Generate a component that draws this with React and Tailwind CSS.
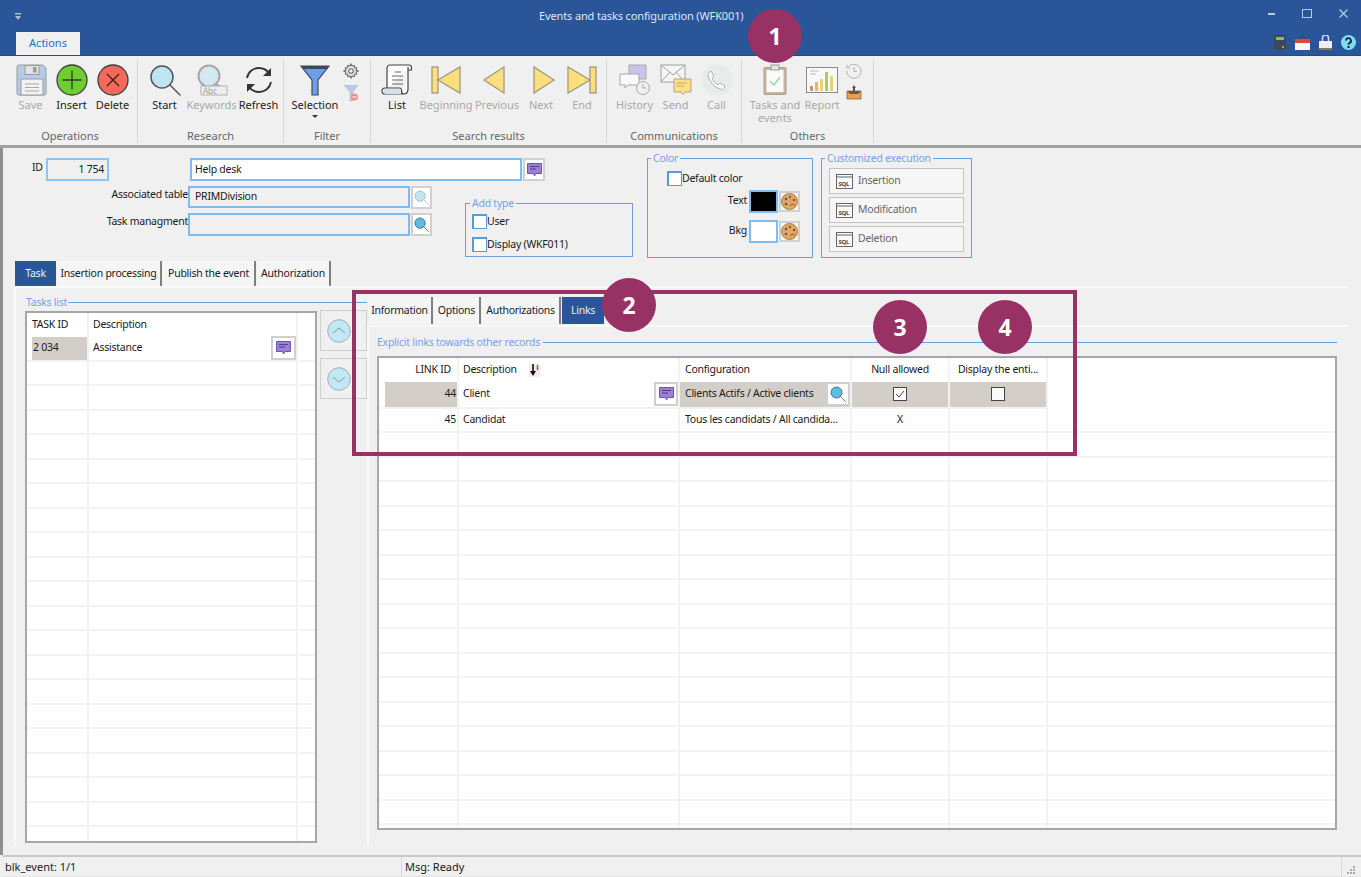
import React from "react";

const Mag = ({ size = 32, fill = "#bfe4f2", stroke = "#555", opacity = 1 }) => (
  <svg width={size} height={size} viewBox="0 0 32 32" style={{ opacity }}>
    <circle cx="13" cy="13" r="11" fill={fill} stroke={stroke} strokeWidth="1.5" />
    <path d="M21 21 L31 31" stroke={stroke} strokeWidth="1.5" strokeLinecap="round" />
  </svg>
);
const Floppy = () => (
  <svg width="32" height="32" viewBox="0 0 32 32">
    <path d="M2 3a2 2 0 0 1 2-2h24l3 3v25a2 2 0 0 1-2 2H4a2 2 0 0 1-2-2z" fill="#b4cbea" stroke="#9a9a9a" />
    <rect x="10" y="1.5" width="14" height="9" fill="#dfe3e8" stroke="#9a9a9a" />
    <rect x="18" y="3" width="3.5" height="5.5" fill="#9a9a9a" />
    <rect x="6" y="15" width="22" height="16" fill="#f2f2f2" stroke="#9a9a9a" />
    <path d="M10 20h14M10 23.500h14M10 27h14" stroke="#aaa" />
  </svg>
);
const RoundIcon = ({ bg, plus }) => (
  <svg width="32" height="32" viewBox="0 0 32 32">
    <circle cx="16" cy="16" r="15" fill={bg} stroke="#3c3c3c" strokeWidth="1.300" />
    {plus ? (
      <path d="M16 6.500v19M6.500 16h19" stroke="#2c3a20" strokeWidth="1.300" />
    ) : (
      <path d="M10 10l12 12M22 10L10 22" stroke="#40201c" strokeWidth="1.300" />
    )}
  </svg>
);
const Keywords = () => (
  <svg width="32" height="32" viewBox="0 0 32 32">
    <circle cx="13" cy="12" r="10.500" fill="#d3e8f0" stroke="#a6a6a6" strokeWidth="2" />
    <path d="M20 20l8 6" stroke="#a6a6a6" strokeWidth="2.500" />
    <rect x="5" y="22" width="26" height="9" fill="#eee" stroke="#b0b0b0" />
    <text x="7" y="30" fontSize="8" fill="#a0a0a0" fontFamily="Noto Sans, sans-serif">Abc</text>
  </svg>
);
const Refresh = () => (
  <svg width="30" height="30" viewBox="0 0 30 30" fill="none" stroke="#333" strokeWidth="1.800">
    <path d="M3 13C4 7 9 3 15 3c5 0 8 2 11 6" />
    <path d="M27 17c-1 6-6 10-12 10-5 0-8-2-11-6" />
    <path d="M27 3v8h-8z" fill="#333" stroke="none" />
    <path d="M3 27v-8h8z" fill="#333" stroke="none" />
  </svg>
);
const Funnel = () => (
  <svg width="30" height="32" viewBox="0 0 30 32">
    <path d="M1 2h28L18 16v15h-6V16z" fill="#6f9fe8" stroke="#3c4a5c" strokeWidth="1.200" />
    <path d="M1 2h28l-2 3H3z" fill="#3c4a5c" />
  </svg>
);
const Gear = () => (
  <svg width="16" height="16" viewBox="0 0 24 24" fill="#e8e8e8" stroke="#666" strokeWidth="1.600">
    <path d="M12 1.500l1.600 3 3-.8.800 3 3 .8-.8 3 3 1.500-3 1.500.8 3-3 .8-.8 3-3-.8-1.600 3-1.600-3-3 .8-.8-3-3-.8.800-3-3-1.500 3-1.500-.8-3 3-.8.800-3 3 .8z" />
    <circle cx="12" cy="12" r="3.500" fill="#f0f0f0" />
  </svg>
);
const SmallFunnel = () => (
  <svg width="15" height="17" viewBox="0 0 15 17">
    <path d="M0 0h14L9 7v9H6V7z" fill="#b7cbe8" stroke="#bbb" strokeWidth=".6" />
    <circle cx="10.500" cy="12" r="3.500" fill="#f0908a" />
    <path d="M8.500 12h4" stroke="#fff" />
  </svg>
);
const Scroll = () => (
  <svg width="32" height="32" viewBox="0 0 32 32" fill="none" stroke="#444" strokeWidth="1.200">
    <path d="M6 24V4a3 3 0 0 1 3-3h19a2.500 2.500 0 0 1 2.500 2.500V6H27" fill="#fff" />
    <path d="M27 3v22c0 3-1 5-4 5H4c-2 0-3-1-3-3s1-3 3-3h15c1 0 1.500 1 1.500 3s1 3 2.500 3" fill="#fff" />
    <path d="M2 25h17l1 5H4z" fill="#d5e2e8" stroke="none" />
    <path d="M14 8h6M11 12h11M11 16h11M11 20h11" strokeWidth="1" stroke="#666" />
  </svg>
);
const Nav = ({ kind }) => {
  const p = { fill: "#fbdf7d", stroke: "#a09a80", strokeWidth: 1.300 };
  return (
    <svg width="30" height="30" viewBox="0 0 30 30">
      {kind === "begin" && (<><rect x="1" y="2" width="6" height="26" {...p} /><path d="M29 2v26L7 15z" {...p} /></>)}
      {kind === "prev" && <path d="M22 2v26L2 15z" {...p} />}
      {kind === "next" && <path d="M8 2v26l20-13z" {...p} />}
      {kind === "end" && (<><path d="M1 2v26l22-13z" {...p} /><rect x="23" y="2" width="6" height="26" {...p} /></>)}
    </svg>
  );
};
const History = () => (
  <svg width="32" height="32" viewBox="0 0 32 32">
    <path d="M10 1h17v14H14l-4-2z" fill="#c9c3ee" stroke="#a8a8a8" />
    <path d="M1 10h19v11H9l-3 3v-3H1z" fill="#fafafa" stroke="#a8a8a8" />
    <circle cx="24" cy="24" r="6.500" fill="#f0f0f0" stroke="#a8a8a8" />
    <path d="M24 20v4h3" stroke="#a8a8a8" fill="none" />
  </svg>
);
const Send = () => (
  <svg width="32" height="32" viewBox="0 0 32 32">
    <rect x="1" y="1" width="24" height="17" fill="#f5f5f5" stroke="#a0a0a0" />
    <path d="M1 1l12 10L25 1M1 18l9-10M25 18l-9-10" fill="none" stroke="#a0a0a0" />
    <path d="M14 15h17v13h-6l-2 2.500-2-2.500h-7z" fill="#fbdf8d" stroke="#b8a56a" />
    <path d="M17 19h10M17 22h7" stroke="#c9a94a" />
  </svg>
);
const Call = () => (
  <svg width="32" height="32" viewBox="0 0 32 32">
    <circle cx="16" cy="16" r="15.500" fill="#e6eceb" />
    <path d="M10 7l3 5-2 2c1 3 3 5 6 7l2-2 5 3c-1 3-3 4-5 3-6-2-10-7-12-13-.5-2 1-4 3-5z" fill="#fafafa" stroke="#b0b0b0" />
  </svg>
);
const Clipboard = () => (
  <svg width="25" height="32" viewBox="0 0 25 32">
    <rect x="1" y="3.500" width="22" height="27" rx="1" fill="#c9b6a0" stroke="#a89c8e" />
    <rect x="3.500" y="6" width="17" height="22" fill="#fafafa" />
    <rect x="8" y="1" width="8" height="5" fill="#e5e5e5" stroke="#999" />
    <path d="M7 17l4 4 6-8" fill="none" stroke="#97d39a" strokeWidth="1.300" />
  </svg>
);
const Report = () => (
  <svg width="32" height="26" viewBox="0 0 32 26">
    <rect x=".5" y=".5" width="31" height="25" fill="#f8f8f8" stroke="#8a8a8a" />
    <rect x="4" y="19" width="3" height="5" fill="#d98a7a" />
    <rect x="9" y="15" width="3" height="9" fill="#eab070" />
    <rect x="14" y="12" width="3" height="12" fill="#f0d070" />
    <rect x="19" y="5" width="3" height="19" fill="#9ccf7a" />
    <rect x="24" y="9" width="3" height="15" fill="#f0cf70" />
    <path d="M4 4h9M4 7h6" stroke="#bbb" />
  </svg>
);
const Clock = () => (
  <svg width="16" height="16" viewBox="0 0 16 16" fill="none" stroke="#b0b0b0">
    <path d="M2.500 4A7 7 0 1 1 1 8" />
    <path d="M8 4v4.500h3" />
    <path d="M1 2v3h3" />
  </svg>
);
const Inbox = () => (
  <svg width="16" height="15" viewBox="0 0 16 15">
    <path d="M8 0l2 3H9v3H7V3H6z" fill="#555" />
    <path d="M1 6h14v8H1z" fill="#e8a04c" stroke="#7c5c30" strokeWidth=".7" />
    <path d="M1 6h14l-3 3H4z" fill="#6a5a44" />
  </svg>
);
const Comment = () => (
  <svg width="15" height="14" viewBox="0 0 15 14">
    <path d="M.5.500h14v10H9l-1.500 2.500L6.500 10.500H.5z" fill="#9c7fdc" stroke="#6b56a8" />
    <path d="M3 3.500h9M3 6h6" stroke="#4f3f86" />
  </svg>
);
const Palette = () => (
  <svg width="17" height="17" viewBox="0 0 17 17">
    <circle cx="8.500" cy="8.500" r="8" fill="#e2a662" stroke="#a87a3c" />
    <circle cx="5" cy="6" r="1.200" fill="#5b4a8a" />
    <circle cx="9" cy="4" r="1.200" fill="#4a7a4a" />
    <circle cx="13" cy="7" r="1.200" fill="#a04030" />
    <circle cx="5" cy="11" r="1.200" fill="#3c5a8a" />
    <path d="M9 13c1-2 3-2 5-1" stroke="#8a5a2c" fill="none" />
  </svg>
);
const Sql = () => (
  <svg width="17" height="15" viewBox="0 0 17 15">
    <rect x=".5" y=".5" width="16" height="14" fill="#fafafa" stroke="#666" />
    <path d="M1 3h15" stroke="#666" />
    <text x="2.500" y="11.500" fontSize="6" fontWeight="700" fill="#444" fontFamily="Noto Sans, sans-serif">SQL</text>
  </svg>
);
const Chevron = ({ up }) => (
  <svg width="24" height="24" viewBox="0 0 24 24">
    <circle cx="12" cy="12" r="11.300" fill="#c0e8f5" stroke="#aab" strokeWidth="1" />
    <path d={up ? "M6 14l6-5 6 5" : "M6 10l6 5 6-5"} fill="none" stroke="#8c9aa0" />
  </svg>
);

const RBtn = ({ w, label, disabled, children, caret }) => (
  <div className="flex flex-col items-center shrink-0" style={{ width: w }}>
    <div className="h-[33px] flex items-center justify-center">{children}</div>
    <div className={`mt-[2px] text-center leading-[13px] whitespace-pre ${disabled ? "text-[#a8a8a8]" : "text-[#222]"}`}>{label}</div>
    {caret && <div className="mt-[4px] w-0 h-0 border-x-[3px] border-x-transparent border-t-[3px] border-t-[#333]" />}
  </div>
);
const RGroup = ({ w, pl, label, children }) => (
  <div className="flex flex-col shrink-0 border-r border-[#d6d6d6] my-[3px] h-[84px]" style={{ width: w }}>
    <div className="flex pt-[4px] flex-1" style={{ paddingLeft: pl }}>{children}</div>
    <div className="text-center text-[#666] leading-[13px] pb-[1px]">{label}</div>
  </div>
);

const Check = ({ label }) => (
  <div className="flex items-center">
    <div className="w-[15px] h-[15px] bg-white border border-[#5b9bd5] border-l-2 border-t-2" />
    <span>{label}</span>
  </div>
);
const IconBtn = ({ children, cls = "w-[22px] h-[23px]" }) => (
  <div className={`${cls} bg-white border-2 border-[#d0d0d0] flex items-center justify-center shrink-0`}>{children}</div>
);
const Tab = ({ label, active, w, h = "h-[26px]" }) => (
  <div
    style={{ width: w }}
    className={`${h} flex items-center justify-center shrink-0 whitespace-nowrap ${
      active ? "bg-[#2a5598] text-[#e8eef8]" : "bg-[#f5f5f5] text-[#222] border-r-2 border-[#808080]"
    }`}
  >
    {label}
  </div>
);

const SqlBtn = ({ label }) => (
  <div className="h-[26px] mb-[3px] bg-[#f6f6f6] border border-[#c4c4c4] flex items-center pl-[6px] gap-[5px] text-[#666]">
    <Sql />
    <span>{label}</span>
  </div>
);

const R = 24.500;

const LeftTable = () => (
  <div className="w-[292px] h-[532px] bg-white border-2 border-[#a4a6ac] overflow-hidden">
    <div className="flex h-[24px] items-center">
      <div className="w-[62px] h-full pl-[5px] flex items-center border-r-2 border-[#f2f2f2]">TASK ID</div>
      <div className="w-[209px] h-full pl-[4px] flex items-center border-r-2 border-[#f2f2f2]">Description</div>
    </div>
    {Array.from({ length: 21 }).map((_, i) => (
      <div key={i} className="flex border-b-2 border-[#f3f3f3]" style={{ height: R }}>
        <div className="w-[62px] pl-[5px] border-r-2 border-[#f2f2f2] shrink-0">
          {i === 0 && <div className="h-full bg-[#d3cfc8] flex items-center pl-[1px]">2 034</div>}
        </div>
        <div className="w-[209px] pl-[4px] border-r-2 border-[#f2f2f2] shrink-0 flex items-center justify-between">
          {i === 0 && (<><span>Assistance</span><IconBtn cls="w-[25px] h-[24px]"><Comment /></IconBtn></>)}
        </div>
      </div>
    ))}
  </div>
);

const cols = [80, 221, 172, 98, 98];
const RRow = ({ cells }) => (
  <div className="flex" style={{ height: R }}>
    {cols.map((w, i) => (
      <div key={i} className="border-r-2 border-[#f2f2f2] shrink-0 h-full" style={{ width: w }}>
        {cells && cells[i]}
      </div>
    ))}
  </div>
);
const Highlight = ({ children, cls = "" }) => <div className={`h-full bg-[#d3cfc8] flex items-center ${cls}`}>{children}</div>;

const RightTable = () => (
  <div className="h-[474px] bg-white border-2 border-[#a4a6ac] overflow-hidden">
    <div className="flex h-[24px]">
      {[
        <div className="h-full flex items-center justify-end pr-[6px]">LINK ID</div>,
        <div className="h-full flex items-center pl-[4px]">
          Description
          <svg className="ml-[12px]" width="11" height="13" viewBox="0 0 11 13">
            <rect width="11" height="13" fill="#eee" />
            <path d="M4 0v9" stroke="#111" strokeWidth="1.600" />
            <path d="M1 7l3 5 3-5z" fill="#111" />
            <path d="M8.500 1v5" stroke="#e33" strokeWidth="1.500" />
          </svg>
        </div>,
        <div className="h-full flex items-center pl-[5px]">Configuration</div>,
        <div className="h-full flex items-center justify-center">Null allowed</div>,
        <div className="h-full flex items-center justify-center whitespace-nowrap">Display the enti...</div>,
      ].map((c, i) => (
        <div key={i} className="border-r-2 border-[#f2f2f2] shrink-0" style={{ width: cols[i] }}>{c}</div>
      ))}
    </div>
    <RRow
      cells={[
        <div className="pl-[6px] h-full"><Highlight cls="justify-end pr-[1px]">44</Highlight></div>,
        <div className="h-full flex items-center justify-between pl-[4px]">Client<IconBtn cls="w-[24px] h-[24px]"><Comment /></IconBtn></div>,
        <Highlight cls="justify-between pl-[5px] whitespace-nowrap">
          <span>Clients Actifs / Active clients</span>
          <IconBtn cls="w-[24px] h-[24px]"><Mag size={16} fill="#55c0e4" stroke="#445" /></IconBtn>
        </Highlight>,
        <Highlight cls="justify-center">
          <svg width="14" height="14" viewBox="0 0 14 14"><rect x=".5" y=".5" width="13" height="13" fill="#fafafa" stroke="#444" /><path d="M3 7l3 3 5-6" fill="none" stroke="#444" /></svg>
        </Highlight>,
        <Highlight cls="justify-center">
          <svg width="14" height="14" viewBox="0 0 14 14"><rect x=".5" y=".5" width="13" height="13" fill="#fafafa" stroke="#444" /></svg>
        </Highlight>,
      ]}
    />
    <RRow
      cells={[
        <div className="h-full flex items-center justify-end pr-[1px] border-t-2 border-[#f3f3f3]">45</div>,
        <div className="h-full flex items-center pl-[4px] border-t-2 border-[#f3f3f3]">Candidat</div>,
        <div className="h-full flex items-center pl-[5px] border-t-2 border-[#f3f3f3] whitespace-nowrap">Tous les candidats / All candida...</div>,
        <div className="h-full flex items-center justify-center border-t-2 border-[#f3f3f3]">X</div>,
        <div className="h-full border-t-2 border-[#f3f3f3]" />,
      ]}
    />
    {Array.from({ length: 17 }).map((_, i) => (
      <div key={i} className="border-t-2 border-[#f3f3f3]" style={{ height: R }}>
        <RRow />
      </div>
    ))}
  </div>
);

const Badge = ({ n, x, y }) => (
  <div
    style={{ left: x - 27, top: y - 27 }}
    className="absolute w-[54px] h-[54px] rounded-full bg-[#983264] text-white flex items-center justify-center text-[23px] font-bold font-['Noto_Sans',sans-serif]"
  >
    {n}
  </div>
);

export default function App() {
  return (
    <div className="relative w-[1361px] h-[877px] overflow-hidden flex flex-col bg-[#f0f0f0] text-[#1a1a1a] text-[11px] font-['Roboto',sans-serif]">
      {/* Title bar */}
      <div className="h-[56px] shrink-0 bg-[#2a5598] flex flex-col border-b border-[#1f4a8c]">
        <div className="h-[33px] flex items-center pl-[15px] pr-[13px]">
          <svg width="6" height="7" viewBox="0 0 6 7"><path d="M0 0h6v1.500H0zM0 3h6L3 7z" fill="#a9bcd8" /></svg>
          <div className="text-[#dfe7f3] ml-[518px] whitespace-nowrap tracking-[-0.13px]">Events and tasks configuration (WFK001)</div>
          <div className="flex items-center gap-[27px] -mt-[5px] ml-auto">
            <svg width="7" height="2" viewBox="0 0 7 2"><path d="M0 1h7" stroke="#bccbe2" strokeWidth="2" /></svg>
            <svg width="10" height="9" viewBox="0 0 10 9"><rect x=".5" y=".5" width="9" height="8" fill="none" stroke="#bccbe2" /></svg>
            <svg width="9" height="9" viewBox="0 0 9 9"><path d="M.5.500l8 8M8.500.500l-8 8" stroke="#bccbe2" strokeWidth="1.200" /></svg>
          </div>
        </div>
        <div className="flex-1 flex items-end justify-between pl-[16px] pr-[5px]">
          <div className="w-[64px] h-[23px] bg-[#f0f0f0] flex items-center justify-center text-[#2a6dc0]">Actions</div>
          <div className="flex items-center gap-[9px] mb-[5px]">
            <svg width="12" height="15" viewBox="0 0 12 15"><rect width="12" height="15" rx="1" fill="#3b4a5a" /><rect x="2" y="2" width="8" height="3" fill="#7ec850" /><rect x="8" y="11" width="2" height="2" fill="#e08a30" /></svg>
            <svg width="15" height="14" viewBox="0 0 15 14"><path d="M4 3l3.500-3 3.500 3" fill="none" stroke="#333" strokeWidth=".7" /><rect y="3" width="15" height="11" fill="#f8f8f8" /><rect y="3" width="15" height="4" fill="#e0483c" /></svg>
            <svg width="13" height="15" viewBox="0 0 13 15"><path d="M3.500 6V3a3 3 0 0 1 6 0v3" fill="none" stroke="#ddd" strokeWidth="1.500" /><rect y="6" width="13" height="8" fill="#f0f0f0" /><rect y="13" width="13" height="2" fill="#8a7a4a" /></svg>
            <svg width="15" height="15" viewBox="0 0 15 15"><circle cx="7.500" cy="7.500" r="7.500" fill="#7fdcf4" /><path d="M5 5.500a2.500 2.500 0 1 1 3.500 2.500c-.7.400-1 .8-1 1.700" fill="none" stroke="#123" strokeWidth="1.800" /><rect x="6.500" y="11" width="2" height="2" fill="#123" /></svg>
          </div>
        </div>
      </div>

      {/* Ribbon */}
      <div className="h-[92px] shrink-0 flex pl-[3px] border-b-[3px] border-[#a0a0a0]">
        <RGroup w={135} pl={7} label="Operations">
          <RBtn w={41} label="Save" disabled><Floppy /></RBtn>
          <RBtn w={41} label="Insert"><RoundIcon bg="#6dcd31" plus /></RBtn>
          <RBtn w={41} label="Delete"><RoundIcon bg="#f4695a" /></RBtn>
        </RGroup>
        <RGroup w={146} pl={3} label="Research">
          <RBtn w={47} label="Start"><Mag /></RBtn>
          <RBtn w={47} label="Keywords" disabled><Keywords /></RBtn>
          <RBtn w={47} label="Refresh"><Refresh /></RBtn>
        </RGroup>
        <RGroup w={87} pl={7} label="Filter">
          <RBtn w={48} label="Selection" caret><Funnel /></RBtn>
          <div className="flex flex-col items-center gap-[6px] ml-[4px]">
            <Gear />
            <SmallFunnel />
          </div>
        </RGroup>
        <RGroup w={236} pl={2} label="Search results">
          <RBtn w={48} label="List"><Scroll /></RBtn>
          <RBtn w={50} label="Beginning" disabled><Nav kind="begin" /></RBtn>
          <RBtn w={52} label="Previous" disabled><Nav kind="prev" /></RBtn>
          <RBtn w={36} label="Next" disabled><Nav kind="next" /></RBtn>
          <RBtn w={46} label="End" disabled><Nav kind="end" /></RBtn>
        </RGroup>
        <RGroup w={135} pl={7} label="Communications">
          <RBtn w={41} label="History" disabled><History /></RBtn>
          <RBtn w={41} label="Send" disabled><Send /></RBtn>
          <RBtn w={41} label="Call" disabled><Call /></RBtn>
        </RGroup>
        <RGroup w={132} pl={7} label="Others">
          <RBtn w={52} label={"Tasks and\nevents"} disabled><Clipboard /></RBtn>
          <RBtn w={42} label="Report" disabled><Report /></RBtn>
          <div className="flex flex-col items-center gap-[6px] ml-[3px]">
            <Clock />
            <Inbox />
          </div>
        </RGroup>
      </div>

      {/* Main */}
      <div className="flex-1 min-h-0 flex flex-col border-l-[3px] border-[#8f8f8f] pl-[11px] pr-[13px] text-[10.5px] tracking-[-0.25px]">
        {/* Form */}
        <div className="h-[113px] shrink-0 flex pt-[10px]">
          <div className="w-[619px] shrink-0 flex flex-col">
            <div className="flex h-[24px] pl-[18px]">
              <span className="w-[14px] pt-[2px]">ID</span>
              <div className="w-[63px] h-[23px] bg-[#f0f0f0] border-2 border-[#8cc4f4] flex items-center justify-end pr-[3px]">1 754</div>
              <div className="w-[332px] h-[23px] ml-[81px] bg-white border-2 border-[#7cbcf2] flex items-center pl-[3px]">Help desk</div>
              <div className="ml-[1px]"><IconBtn><Comment /></IconBtn></div>
            </div>
            <div className="flex">
              <div className="w-[451px] shrink-0 flex flex-col gap-[5px] pt-[4px]">
                <div className="flex items-start h-[22px]">
                  <span className="w-[174px] text-right pt-[1px]">Associated table</span>
                  <div className="w-[222px] h-[22px] bg-[#f0f0f0] border-2 border-[#7cbcf2] flex items-center pl-[5px]">PRIMDivision</div>
                  <div className="ml-[1px]"><IconBtn cls="w-[21px] h-[23px]"><Mag size={15} fill="#bde6f0" stroke="#aaa" /></IconBtn></div>
                </div>
                <div className="flex items-start h-[23px]">
                  <span className="w-[174px] text-right pt-[1px]">Task managment</span>
                  <div className="w-[222px] h-[23px] bg-[#f0f0f0] border-2 border-[#7cbcf2]" />
                  <div className="ml-[1px]"><IconBtn cls="w-[21px] h-[23px]"><Mag size={15} fill="#55c0e4" stroke="#445" /></IconBtn></div>
                </div>
              </div>
              <fieldset className="w-[168px] h-[60px] mt-[15px] border border-[#6a9fdc] pl-[6px]">
                <legend className="-ml-[2px] px-[2px] text-[#7a9fe0] leading-[13px]">Add type</legend>
                <div className="flex flex-col gap-[7px] mt-[4px]">
                  <Check label="User" />
                  <Check label="Display (WKF011)" />
                </div>
              </fieldset>
            </div>
          </div>
          <fieldset className="w-[166px] h-[106px] ml-[14px] -mt-[6px] border border-[#6a9fdc]">
            <legend className="ml-[3px] px-[2px] text-[#7a9fe0] leading-[13px]">Color</legend>
            <div className="pl-[19px] mt-[6px]"><Check label="Default color" /></div>
            <div className="flex items-center justify-end h-[23px] mt-[3px] pr-[12px]">
              <span className="mr-[2px]">Text</span>
              <div className="w-[29px] h-[23px] bg-black border-2 border-[#7cbcf2]" />
              <div className="w-[21px] h-[21px] bg-[#f6f6f6] border-2 border-[#d0d0d0] ml-[1px] flex items-center justify-center"><Palette /></div>
            </div>
            <div className="flex items-center justify-end h-[23px] mt-[7px] pr-[12px]">
              <span className="mr-[2px]">Bkg</span>
              <div className="w-[29px] h-[23px] bg-white border-2 border-[#7cbcf2]" />
              <div className="w-[21px] h-[21px] bg-[#f6f6f6] border-2 border-[#d0d0d0] ml-[1px] flex items-center justify-center"><Palette /></div>
            </div>
          </fieldset>
          <fieldset className="w-[151px] h-[106px] ml-[8px] -mt-[6px] border border-[#6a9fdc] px-[7px]">
            <legend className="-ml-[4px] px-[2px] text-[#7a9fe0] leading-[13px]">Customized execution</legend>
            <div className="mt-[3px]">
              <SqlBtn label="Insertion" />
              <SqlBtn label="Modification" />
              <SqlBtn label="Deletion" />
            </div>
          </fieldset>
        </div>

        {/* Tabs */}
        <div className="flex gap-[1px] h-[25px] shrink-0 pl-[1px]">
          <Tab label="Task" active w={41} />
          <Tab label="Insertion processing" w={105} />
          <Tab label="Publish the event" w={93} />
          <Tab label="Authorization" w={74} />
        </div>

        {/* Task panel */}
        <div className="h-[560px] shrink-0 flex border-t-2 border-l-2 border-[#f9f9f9]">
          <div className="w-[351px] shrink-0 pl-[9px] pt-[8px]">
            <fieldset className="border-t border-[#6a9fdc] h-[540px]">
              <legend className="px-[1px] mr-[1px] text-[#7a9fe0] leading-[13px]">Tasks list</legend>
              <div className="flex gap-[3px] pt-[2px]">
                <LeftTable />
                <div className="flex flex-col gap-[7px] flex-1 -mt-[1px]">
                  {[true, false].map((up) => (
                    <div key={String(up)} className="h-[41px] border border-[#d0d0d0] pl-[6px] flex items-center">
                      <Chevron up={up} />
                    </div>
                  ))}
                </div>
              </div>
            </fieldset>
          </div>
          <div className="flex-1 min-w-0 flex flex-col pt-[9px]">
            <div className="flex gap-[1px] h-[28px] pl-[1px] shrink-0">
              <Tab label="Information" w={65} h="h-[27px]" />
              <Tab label="Options" w={47} h="h-[27px]" />
              <Tab label="Authorizations" w={79} h="h-[27px]" />
              <Tab label="Links" active w={42} h="h-[27px]" />
            </div>
            <div className="flex-1 border-t-2 border-l-2 border-[#f9f9f9] pl-[8px] pr-[11px] pt-[9px]">
              <fieldset className="border-t border-[#6a9fdc]">
                <legend className="text-[#7a9fe0] leading-[13px] pr-[3px]">Explicit links towards other records</legend>
                <div className="pt-[7px]">
                  <RightTable />
                </div>
              </fieldset>
            </div>
          </div>
        </div>
      </div>

      {/* Status bar */}
      <div className="h-[22px] shrink-0 flex items-center border-t-[2px] border-[#c8c8c8] border-b border-b-[#e4e4e4] ml-[3px]">
        <div className="w-[399px] pl-[2px] pt-[1px] border-r border-[#d8d8d8] h-full flex items-center">blk_event: 1/1</div>
        <div className="pl-[3px] pt-[1px] flex-1 h-full flex items-center">Msg: Ready</div>
        <div className="w-[20px] border-l border-[#d8d8d8] h-full flex items-end justify-center pb-[1px]">
          <svg width="9" height="9" viewBox="0 0 9 9" fill="#a8a8a8"><rect x="6" y="0" width="2" height="2" /><rect x="3" y="3" width="2" height="2" /><rect x="6" y="3" width="2" height="2" /><rect x="0" y="6" width="2" height="2" /><rect x="3" y="6" width="2" height="2" /><rect x="6" y="6" width="2" height="2" /></svg>
        </div>
      </div>

      {/* Annotations */}
      <div className="absolute left-[352px] top-[290px] w-[725px] h-[166px] border-[4px] border-[#983264]" />
      <Badge n="1" x={775} y={36} />
      <Badge n="2" x={629} y={305} />
      <Badge n="3" x={900} y={327} />
      <Badge n="4" x={1005} y={327} />
    </div>
  );
}
